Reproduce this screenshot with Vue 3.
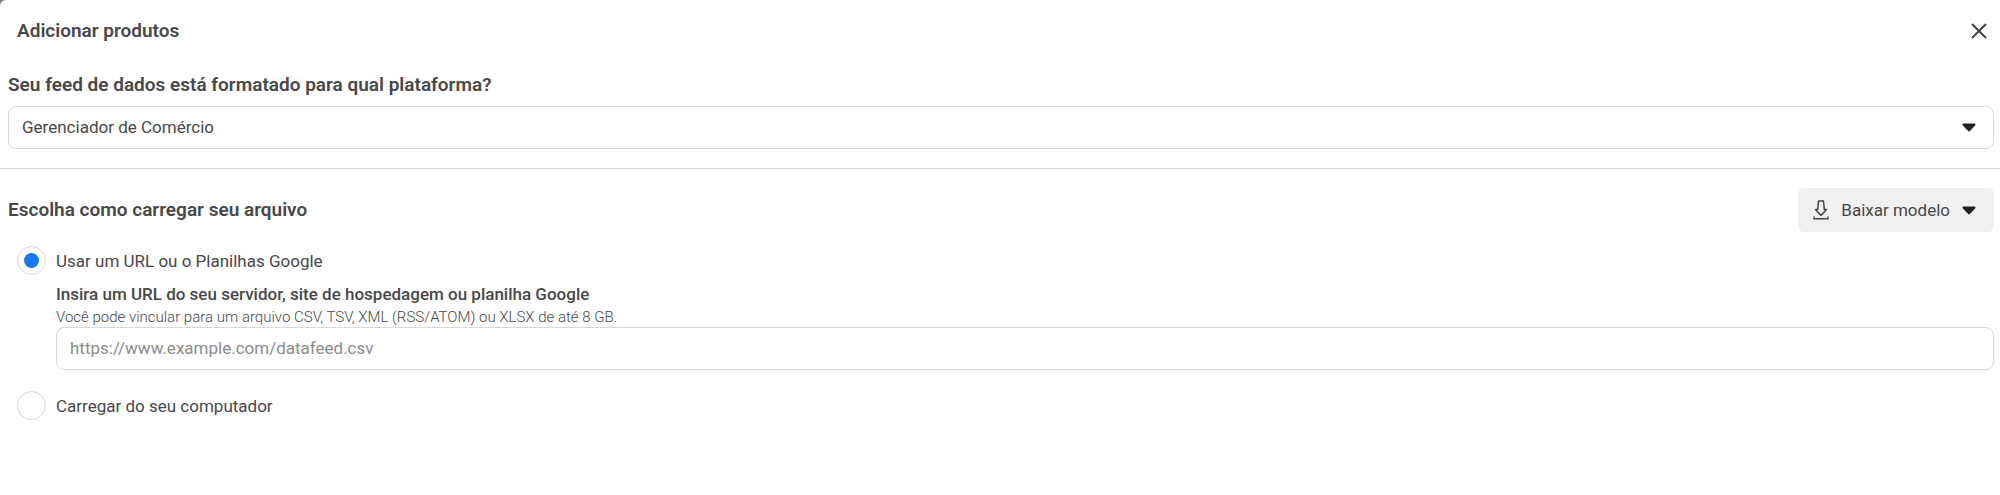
<template>
  <div class="dialog" role="dialog" aria-labelledby="dialog-title">
    <header class="dialog__header">
      <h1 id="dialog-title" class="dialog__title">Adicionar produtos</h1>
      <button type="button" class="dialog__close" aria-label="Fechar">
        <svg width="16" height="16" viewBox="0 0 16 16" aria-hidden="true">
          <path d="M1 1 15 15M15 1 1 15" fill="none" stroke="#444" stroke-width="2" />
        </svg>
      </button>
    </header>

    <section class="platform">
      <label class="heading" for="platform">Seu feed de dados está formatado para qual plataforma?</label>
      <div class="platform__field">
        <select id="platform" v-model="platform" class="field platform__select">
          <option v-for="item in platforms" :key="item" :value="item">{{ item }}</option>
        </select>
        <svg class="platform__caret" width="14" height="9" viewBox="0 0 14 9" aria-hidden="true">
          <path d="M1 1h12v1L8 7.5q-1 .8-2 0L1 2z" fill="#222" stroke="#222" stroke-linejoin="round" />
        </svg>
      </div>
    </section>

    <section class="upload">
      <div class="upload__header">
        <h2 class="heading">Escolha como carregar seu arquivo</h2>
        <button type="button" class="template-button">
          <svg width="16" height="20" viewBox="0 0 16 20" aria-hidden="true">
            <path d="M5.5 1h5l.8 8.5h2.2L8 15.5 2.5 9.5h2.2z" fill="none" stroke="#444" stroke-width="1.5" stroke-linejoin="round" />
            <path d="M1 16.5v2.3h14v-2.3" fill="none" stroke="#444" stroke-width="1.4" />
          </svg>
          <span>Baixar modelo</span>
          <svg width="14" height="9" viewBox="0 0 14 9" aria-hidden="true">
            <path d="M1 1h12v1L8 7.5q-1 .8-2 0L1 2z" fill="#222" stroke="#222" stroke-linejoin="round" />
          </svg>
        </button>
      </div>

      <div class="options">
        <label class="option">
          <input v-model="source" type="radio" name="source" value="url" class="option__radio" />
          <span>Usar um URL ou o Planilhas Google</span>
        </label>

        <div v-if="source === 'url'" class="url">
          <label class="url__label" for="feed-url">Insira um URL do seu servidor, site de hospedagem ou planilha Google</label>
          <p id="feed-hint" class="url__hint">Você pode vincular para um arquivo CSV, TSV, XML (RSS/ATOM) ou XLSX de até 8 GB.</p>
          <input
            id="feed-url"
            v-model="feedUrl"
            type="url"
            class="field"
            placeholder="https://www.example.com/datafeed.csv"
            aria-describedby="feed-hint"
          />
        </div>

        <label class="option">
          <input v-model="source" type="radio" name="source" value="computer" class="option__radio" />
          <span>Carregar do seu computador</span>
        </label>
      </div>
    </section>
  </div>
</template>

<script setup>
import { ref } from 'vue'

const platforms = ['Gerenciador de Comércio']

const platform = ref(platforms[0])
const source = ref('url')
const feedUrl = ref('')
</script>

<style>
body {
  background: #808080;
}
</style>

<style scoped>
.dialog {
  min-height: 100vh;
  box-sizing: border-box;
  border-top-left-radius: 6px;
  background: #fff;
  color: #484848;
  font-family: Roboto, sans-serif;
  font-size: 17px;
  line-height: 24px;
}

.dialog__header {
  display: flex;
  align-items: center;
  justify-content: space-between;
  padding: 19px 13px 0 17px;
}

.dialog__title,
.heading {
  margin: 0;
  font-size: 19px;
  font-weight: 600;
  line-height: 24px;
}

.dialog__close {
  display: flex;
  padding: 0;
  border: none;
  background: transparent;
  cursor: pointer;
}

.platform {
  padding: 30px 6px 19px 8px;
  border-bottom: 1px solid #d8d8d8;
}

.platform .heading {
  display: block;
}

.platform__field {
  position: relative;
  margin-top: 9px;
}

.field {
  display: block;
  box-sizing: border-box;
  width: 100%;
  height: 43px;
  padding: 0 13px 2px;
  border: 1px solid #d8d8d8;
  border-radius: 8px;
  background: #fff;
  color: inherit;
  font: inherit;
}

.field::placeholder {
  color: #8c8c8c;
}

.platform__select {
  appearance: none;
}

.platform__caret {
  position: absolute;
  top: 17px;
  right: 18px;
  pointer-events: none;
}

.upload {
  padding: 19px 6px 0 8px;
}

.upload__header {
  display: flex;
  align-items: center;
  justify-content: space-between;
}

.template-button {
  display: flex;
  align-items: center;
  gap: 12px;
  height: 44px;
  padding: 0 18px 0 15px;
  border: none;
  border-radius: 6px;
  background: #f0f0f0;
  color: inherit;
  font: inherit;
  cursor: pointer;
}

.options {
  padding: 14px 0 0 9px;
}

.option {
  display: flex;
  align-items: center;
  gap: 10px;
}

.option__radio {
  appearance: none;
  display: grid;
  place-items: center;
  box-sizing: border-box;
  width: 29px;
  height: 29px;
  margin: 0;
  border: 1px solid #d8d8d8;
  border-radius: 50%;
}

.option__radio:checked::before {
  content: '';
  width: 15px;
  height: 15px;
  border-radius: 50%;
  background: #1877f2;
}

.url {
  padding: 7px 0 21px 39px;
}

.url__label {
  display: block;
  font-weight: 500;
}

.url__hint {
  margin: 2px 0 0;
  font-size: 15px;
  font-weight: 300;
  line-height: 19px;
}
</style>
